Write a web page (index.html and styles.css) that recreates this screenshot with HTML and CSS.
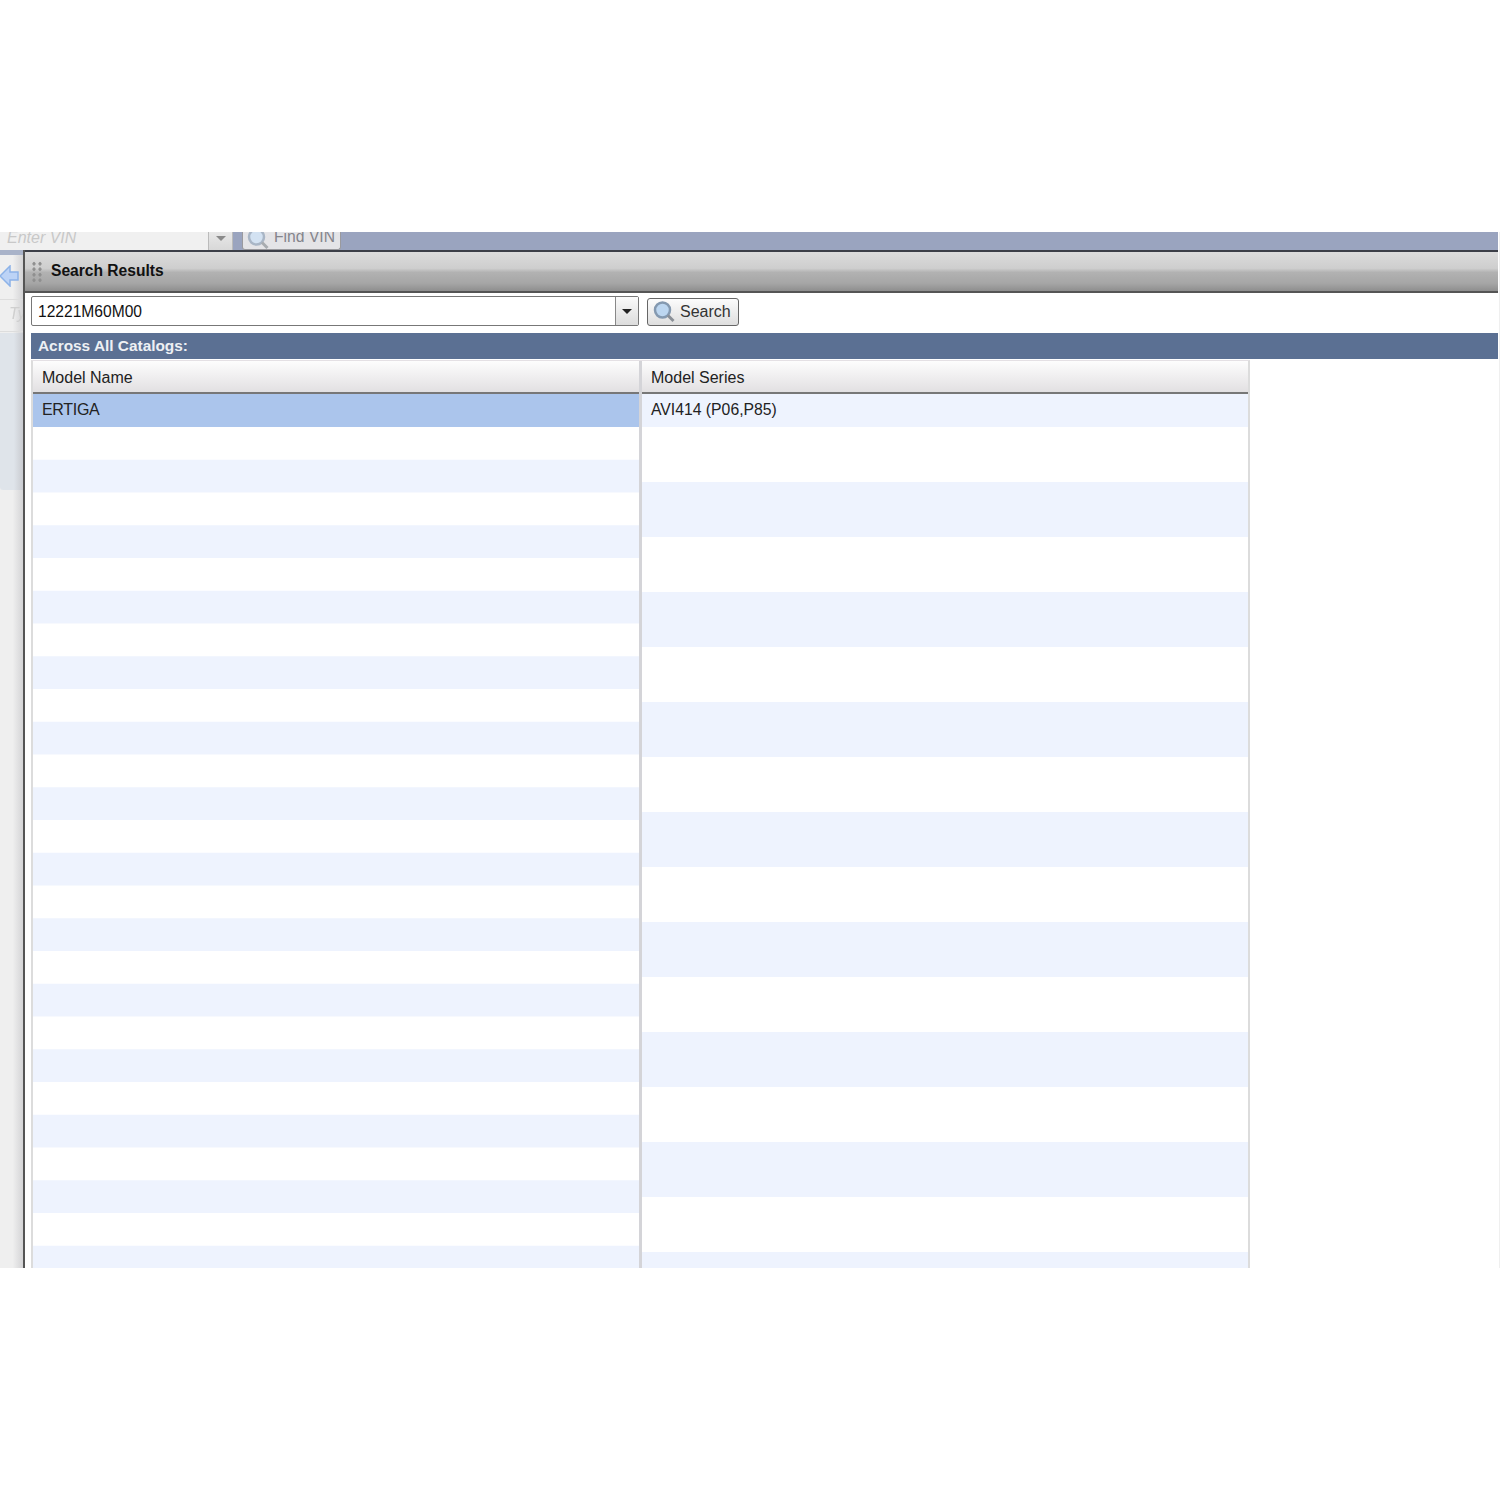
FILE: index.html
```html
<!DOCTYPE html>
<html lang="en">
<head>
<meta charset="utf-8">
<title>Search Results</title>
<link rel="stylesheet" href="styles.css">
</head>
<body>
<div class="shot">
  <div class="topbar">
    <div class="vin-input"><span>Enter VIN</span></div>
    <div class="vin-drop"><span class="caret caret-muted"></span></div>
    <div class="vin-btn">
      <svg class="lens" viewBox="0 0 22 22"><circle cx="9.5" cy="9" r="7.5" fill="#d3e2f2" stroke="#a9b6c6" stroke-width="2.5"/><path d="M15 14.5l5.5 5.5" stroke="#a8acb0" stroke-width="3"/></svg>
      <span>Find VIN</span>
    </div>
  </div>
  <div class="main">
    <div class="side">
      <div class="side-top"></div>
      <div class="side-arrow">
        <svg class="arrow" viewBox="0 0 20 22"><path d="M1 11L11 1v6h8v8h-8v6z" fill="#bcd3f6" stroke="#8db3e8" stroke-width="1.5"/></svg>
      </div>
      <div class="side-type"><span>Ty</span></div>
      <div class="side-panel"></div>
    </div>
    <div class="panel">
      <div class="panel-head">
        <span class="grip"></span>
        <span class="panel-title">Search Results</span>
      </div>
      <div class="panel-body">
        <div class="search-row">
          <div class="combo">
            <div class="combo-text">12221M60M00</div>
            <div class="combo-btn"><span class="caret"></span></div>
          </div>
          <div class="search-btn">
            <svg class="lens" viewBox="0 0 22 22"><circle cx="9.5" cy="9" r="7.5" fill="#bcd6f0" stroke="#8499b0" stroke-width="2.5"/><path d="M15 14.5l5.5 5.5" stroke="#8a8f96" stroke-width="3"/></svg>
            <span>Search</span>
          </div>
        </div>
        <div class="section">Across All Catalogs:</div>
        <div class="grid">
          <div class="col col-name">
            <div class="col-head">Model Name</div>
            <div class="cell cell-selected">ERTIGA</div>
            <div class="col-rows rows-name"></div>
          </div>
          <div class="col col-series">
            <div class="col-head">Model Series</div>
            <div class="cell cell-first">AVI414 (P06,P85)</div>
            <div class="col-rows rows-series"></div>
          </div>
        </div>
      </div>
    </div>
  </div>
</div>
</body>
</html>
```
FILE: styles.css
```css
* { box-sizing: border-box; }
html, body { margin: 0; background: #fff; }
body { font-family: "Liberation Sans", Arial, sans-serif; color: #222; }
.shot { margin-top: 232px; width: 1500px; height: 1036px; padding-right: 1px; border-right: 1px solid #efefef; overflow: hidden; display: flex; flex-direction: column; filter: blur(0.35px); }

.topbar { height: 18px; flex: none; display: flex; align-items: flex-end; background: #9aa4bf; overflow: hidden; }
.vin-input { width: 208px; height: 18px; background: #f0f0f0; color: #c8c8c8; font-style: italic; font-size: 16px; padding-left: 7px; line-height: 12px; }
.vin-drop { width: 25px; height: 18px; background: linear-gradient(180deg, #e8e8e8, #d8d8d8); border-left: 1px solid #bbb; border-right: 1px solid #bbb; display: flex; justify-content: center; padding-top: 4px; }
.vin-btn { margin-left: 9px; width: 99px; height: 18px; background: #e4e4e7; border: 1px solid #9a9a9e; border-top: 0; border-radius: 0 0 3px 3px; display: flex; align-items: flex-end; gap: 5px; padding: 0 0 0 4px; color: #85858c; font-size: 15.7px; line-height: 16px; overflow: hidden; }
.vin-btn .lens { margin-bottom: -1px; }
.vin-btn span { margin-bottom: 4px; }

.caret { display: block; width: 0; height: 0; border: 5px solid transparent; border-top: 5px solid #222; border-bottom: 0; }
.caret-muted { border-top-color: #8a8a8a; }
.lens { width: 22px; height: 22px; flex: none; }

.main { flex: 1; display: flex; min-height: 0; }
.side { width: 23px; flex: none; background: linear-gradient(90deg, #efefef 0, #efefef 55%, #d4d4d6 100%); display: flex; flex-direction: column; }
.side-top { height: 5px; background: #a9b3c9; }
.side-arrow { height: 44px; display: flex; align-items: center; }
.arrow { width: 20px; height: 22px; margin-top: -2px; margin-left: -1px; }
.side-type { height: 33px; border-top: 1px solid #ddd; border-bottom: 1px solid #ddd; color: #cfcfcf; font-style: italic; font-size: 16px; line-height: 28px; padding-left: 9px; overflow: hidden; }
.side-panel { margin-top: 1px; height: 157px; background: linear-gradient(90deg, #dfe4ea 0, #dfe4ea 60%, #c9cbd0 100%); border-radius: 0 0 0 3px; }

.panel { flex: 1; min-width: 0; border-left: 2px solid #555; display: flex; flex-direction: column; background: #fff; }
.panel-head { height: 43px; flex: none; border-top: 2px solid #3c3f48; border-bottom: 2px solid #555; background: linear-gradient(180deg, #dcdcdc 0, #cecece 42%, #b2b2b2 52%, #a6a6a6 80%, #8e8e8e 100%); display: flex; align-items: center; padding-left: 6px; }
.grip { width: 12px; height: 22px; flex: none; background-image: radial-gradient(circle, #8f8f8f 1.4px, transparent 1.8px); background-size: 6px 5.5px; }
.panel-title { margin: -1px 0 0 8px; font-size: 15.6px; font-weight: 700; color: #111; }

.panel-body { flex: 1; min-height: 0; padding: 3px 0 0 6px; display: flex; flex-direction: column; }
.search-row { display: flex; height: 30px; flex: none; align-items: center; gap: 8px; }
.combo { width: 608px; height: 30px; border: 1px solid #777; border-radius: 2px; display: flex; background: #fff; }
.combo-text { flex: 1; font-size: 15.6px; line-height: 29px; padding-left: 6px; color: #111; }
.combo-btn { width: 23px; flex: none; border-left: 1px solid #888; background: linear-gradient(180deg, #fafafa, #dcdcdc); display: flex; align-items: center; justify-content: center; }
.search-btn { width: 92px; height: 28px; margin-top: 1px; border: 1px solid #666; border-radius: 3px; background: linear-gradient(180deg, #fcfcfc, #dedede); display: flex; align-items: center; gap: 5px; padding-left: 5px; font-size: 16px; color: #333; }

.section { margin-top: 7px; height: 26px; flex: none; background: #5b7093; color: #eef0f4; font-size: 15.4px; font-weight: 700; line-height: 25px; padding-left: 7px; }

.grid { margin-top: 1px; width: 1219px; flex: 1; min-height: 0; display: flex; border-right: 2px solid #dcdcdc; border-left: 2px solid #dcdcdc; border-top: 1px solid #e4e0e4; }
.col { display: flex; flex-direction: column; min-height: 0; overflow: hidden; }
.col-name { width: 606px; flex: none; }
.col-series { flex: 1; border-left: 3px solid #d4d4d8; }
.col-head { height: 33px; flex: none; border-bottom: 2px solid #777; background: linear-gradient(180deg, #fdfdfd, #e2e0e2); font-size: 16px; line-height: 33px; padding-left: 9px; color: #222; }
.cell { height: 33px; flex: none; font-size: 16px; letter-spacing: -0.3px; line-height: 32px; padding-left: 9px; color: #222; }
.cell-selected { background: #abc5ec; }
.cell-first { background: #eef3fe; font-size: 15.75px; letter-spacing: 0; }
.col-rows { flex: 1; min-height: 0; }
.rows-name { background-image: linear-gradient(180deg, transparent 0, transparent 50%, #eef3fe 50%, #eef3fe 100%); background-size: 100% 65.5px; }
.rows-series { background-image: linear-gradient(180deg, transparent 0, transparent 50%, #eef3fe 50%, #eef3fe 100%); background-size: 100% 110px; }
```
